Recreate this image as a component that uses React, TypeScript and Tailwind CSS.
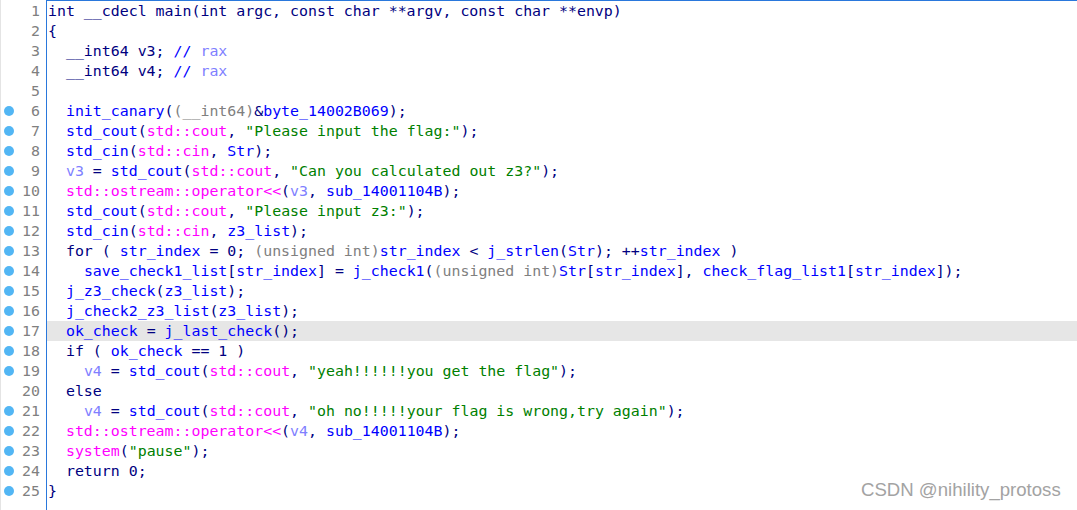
type Kind = 'k' | 'f' | 'v' | 'l' | 's' | 'c' | 'm'
type Token = [Kind, string]
type Line = { tokens: Token[]; bp?: boolean; hl?: boolean }

const tone: Record<Kind, string> = {
  k: 'text-[#000080]',
  f: 'text-[#0000ff]',
  v: 'text-[#8080ff]',
  l: 'text-[#ff00ff]',
  s: 'text-[#008000]',
  c: 'text-[#808080]',
  m: 'text-[#0000ff]',
}

const cout = (indent: string, target: Token[], msg: string): Token[] => [
  ['k', indent],
  ...target,
  ['f', 'std_cout'],
  ['k', '('],
  ['l', 'std::cout'],
  ['k', ', '],
  ['s', `"${msg}"`],
  ['k', ');'],
]

const lines: Line[] = [
  { tokens: [['k', 'int __cdecl main(int argc, const char **argv, const char **envp)']] },
  { tokens: [['k', '{']] },
  { tokens: [['k', '  __int64 v3; '], ['m', '// '], ['v', 'rax']] },
  { tokens: [['k', '  __int64 v4; '], ['m', '// '], ['v', 'rax']] },
  { tokens: [] },
  {
    bp: true,
    tokens: [['k', '  '], ['f', 'init_canary'], ['k', '('], ['c', '(__int64)'], ['k', '&'], ['f', 'byte_14002B069'], ['k', ');']],
  },
  { bp: true, tokens: cout('  ', [], 'Please input the flag:') },
  { bp: true, tokens: [['k', '  '], ['f', 'std_cin'], ['k', '('], ['l', 'std::cin'], ['k', ', '], ['f', 'Str'], ['k', ');']] },
  { bp: true, tokens: cout('  ', [['v', 'v3'], ['k', ' = ']], 'Can you calculated out z3?') },
  {
    bp: true,
    tokens: [['k', '  '], ['l', 'std::ostream::operator<<'], ['k', '('], ['v', 'v3'], ['k', ', '], ['f', 'sub_14001104B'], ['k', ');']],
  },
  { bp: true, tokens: cout('  ', [], 'Please input z3:') },
  { bp: true, tokens: [['k', '  '], ['f', 'std_cin'], ['k', '('], ['l', 'std::cin'], ['k', ', '], ['f', 'z3_list'], ['k', ');']] },
  {
    bp: true,
    tokens: [
      ['k', '  for ( '], ['f', 'str_index'], ['k', ' = 0; '], ['c', '(unsigned int)'], ['f', 'str_index'], ['k', ' < '],
      ['f', 'j_strlen'], ['k', '('], ['f', 'Str'], ['k', '); ++'], ['f', 'str_index'], ['k', ' )'],
    ],
  },
  {
    bp: true,
    tokens: [
      ['k', '    '], ['f', 'save_check1_list'], ['k', '['], ['f', 'str_index'], ['k', '] = '], ['f', 'j_check1'], ['k', '('],
      ['c', '(unsigned int)'], ['f', 'Str'], ['k', '['], ['f', 'str_index'], ['k', '], '], ['f', 'check_flag_list1'],
      ['k', '['], ['f', 'str_index'], ['k', ']);'],
    ],
  },
  { bp: true, tokens: [['k', '  '], ['f', 'j_z3_check'], ['k', '('], ['f', 'z3_list'], ['k', ');']] },
  { bp: true, tokens: [['k', '  '], ['f', 'j_check2_z3_list'], ['k', '('], ['f', 'z3_list'], ['k', ');']] },
  { bp: true, hl: true, tokens: [['k', '  '], ['f', 'ok_check'], ['k', ' = '], ['f', 'j_last_check'], ['k', '();']] },
  { bp: true, tokens: [['k', '  if ( '], ['f', 'ok_check'], ['k', ' == 1 )']] },
  { bp: true, tokens: cout('    ', [['v', 'v4'], ['k', ' = ']], 'yeah!!!!!!you get the flag') },
  { tokens: [['k', '  else']] },
  { bp: true, tokens: cout('    ', [['v', 'v4'], ['k', ' = ']], 'oh no!!!!!your flag is wrong,try again') },
  {
    bp: true,
    tokens: [['k', '  '], ['l', 'std::ostream::operator<<'], ['k', '('], ['v', 'v4'], ['k', ', '], ['f', 'sub_14001104B'], ['k', ');']],
  },
  { bp: true, tokens: [['k', '  '], ['l', 'system'], ['k', '('], ['s', '"pause"'], ['k', ');']] },
  { bp: true, tokens: [['k', '  return 0;']] },
  { bp: true, tokens: [['k', '}']] },
]

const mono = "font-['DejaVu_Sans_Mono','Liberation_Mono',monospace] text-[14.9px] leading-5"

export default function App() {
  return (
    <div className="relative h-[510px] w-full overflow-hidden bg-white">
      <div className="flex h-full">
        {/* gutter */}
        <div className={`w-[46px] shrink-0 border-l border-[#e4e4e4] pt-px ${mono}`}>
          {lines.map((line, i) => (
            <div key={i} className="flex h-5 items-center">
              <div className="flex w-[13px] justify-end">
                {line.bp && <span className="h-[10px] w-[10px] rounded-full bg-[#52b6f4]" />}
              </div>
              <span className="flex-1 pr-[6px] text-right text-[#808080]">{i + 1}</span>
            </div>
          ))}
        </div>
        {/* pseudocode */}
        <div className={`flex-1 border-l border-t border-[#2a78dc] ${mono}`}>
          {lines.map((line, i) => (
            <div key={i} className={`h-5 whitespace-pre pl-px ${line.hl ? 'bg-[#e6e6e6]' : ''}`}>
              {line.tokens.map(([kind, text], j) => (
                <span key={j} className={tone[kind]}>
                  {text}
                </span>
              ))}
            </div>
          ))}
        </div>
      </div>
      <div className="absolute left-[861px] top-[481px] font-['Liberation_Sans',Arial,sans-serif] text-[18.6px] leading-[18px] text-[#a3a3a3]">
        CSDN @nihility_protoss
      </div>
    </div>
  )
}
